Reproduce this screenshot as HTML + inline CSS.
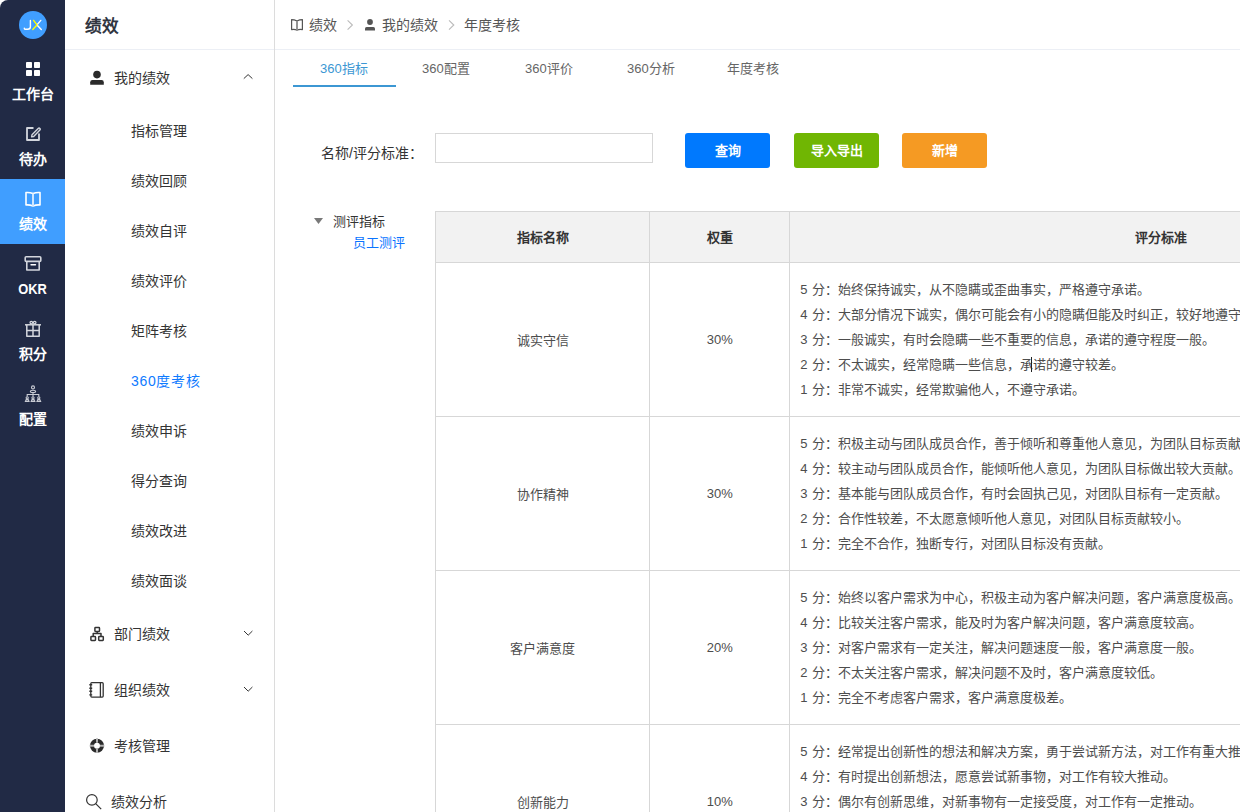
<!DOCTYPE html>
<html lang="zh-CN">
<head>
<meta charset="utf-8">
<style>
*{box-sizing:border-box;margin:0;padding:0}
html,body{width:1240px;height:812px;overflow:hidden;background:#fff}
body{position:relative;font-family:"Liberation Sans",sans-serif;color:#333}
.abs{position:absolute}
#side{position:absolute;left:0;top:0;width:65px;height:812px;background:#212a45;border-top-left-radius:8px}
.avatar{position:absolute;left:19px;top:11px;width:28px;height:28px;border-radius:50%;background:#409eff;color:#fff;font-size:14px;line-height:28px;text-align:center}
.nav{position:absolute;left:0;width:65px;height:65px;color:#fff;text-align:center}
.nav.act{background:#409eff}
.nav svg{position:absolute;left:25px;top:13px}
.nav .t{position:absolute;left:0;right:0;top:35px;font-size:14px;font-weight:bold;line-height:20px}
#panel{position:absolute;left:65px;top:0;width:210px;height:812px;background:#fff;border-right:1px solid #dcdcdc}
.ph{position:absolute;left:0;top:0;width:209px;height:50px;border-bottom:1px solid #eceff5}
.ph span{position:absolute;left:20px;top:14.5px;font-size:16.6px;font-weight:bold;line-height:24px;color:#30353f}
.mi{position:absolute;left:0;width:209px;height:20px;font-size:14px;line-height:20px;color:#333}
.mi .t{position:absolute;left:49px;top:0}
.mi svg{position:absolute}
.sub{position:absolute;left:66px;font-size:14px;line-height:20px;color:#333}
#main{position:absolute;left:275px;top:0;right:0;height:812px}
.bc{position:absolute;left:0;top:0;right:0;height:50px;border-bottom:1px solid #eceff5}
.bct{position:absolute;top:15px;font-size:14px;line-height:20px;color:#555}
.tab{position:absolute;top:59px;font-size:13px;line-height:20px;color:#666}
.tab.act{color:#3c97d3}
.lbl{position:absolute;font-size:14px;line-height:20px;color:#333}
.btn{position:absolute;top:133px;width:85px;height:35px;border-radius:3px;color:#fff;font-size:13px;font-weight:bold;text-align:center;line-height:35px}
table{position:absolute;left:160px;top:211px;border-collapse:collapse;table-layout:fixed;width:1097px}
td,th{border:1px solid #d7d7d7;font-size:13px;color:#4d4d4d;text-align:center;vertical-align:middle}
th{background:#f2f2f2;height:51px;font-weight:bold;padding-bottom:2px;color:#333}
td{height:154px}
td.c{text-align:left;padding-left:10px;white-space:nowrap;line-height:25px;word-spacing:0.4px}
</style>
</head>
<body>
<div id="side">
  <div class="avatar"></div>
  <svg class="abs" style="left:0;top:0" width="65" height="50" viewBox="0 0 65 50"><g fill="none" stroke-width="1.4" stroke-linecap="round" stroke-linejoin="round"><path d="M30.4 20.4V26.8Q30.4 29.3 27.6 29.3H25Q24.3 29.3 24.3 28.2" stroke="#fff"/><path d="M40.8 20.4L37 24.9L41.3 29.4" stroke="#fff"/><path d="M33.6 20.4L37 24.9L32.8 29.4" stroke="#ff0"/></g></svg>
  <div class="nav" style="top:49px"><div class="t">工作台</div></div>
  <div class="nav" style="top:114px"><div class="t">待办</div></div>
  <div class="nav act" style="top:179px"><div class="t">绩效</div></div>
  <div class="nav" style="top:244px"><div class="t"><span style="display:inline-block;transform:scale(0.92,1.09);transform-origin:50% 75%">OKR</span></div></div>
  <div class="nav" style="top:309px"><div class="t">积分</div></div>
  <div class="nav" style="top:374px"><div class="t">配置</div></div>
  <svg class="abs" style="left:0;top:0" width="65" height="440" viewBox="0 0 65 440">
    <g fill="#fff"><rect x="26" y="62" width="6" height="6" rx="0.8"/><rect x="34" y="62" width="6" height="6" rx="0.8"/><rect x="26" y="70" width="6" height="6" rx="0.8"/><rect x="34" y="70" width="6" height="6" rx="0.8"/></g>
    <g fill="none" stroke="#d3d6dd" stroke-width="1.8" stroke-linejoin="round">
      <path d="M33.5 128H27V140H39V133.5"/>
      <path d="M32 134.8L38.2 128.4a1.2 1.2 0 0 1 1.7 1.7L33.7 136.5L31.6 136.9Z" stroke-width="1.4"/>
    </g>
    <g fill="none" stroke="#fff" stroke-width="1.6" stroke-linejoin="round">
      <path d="M26 192.6Q29.5 192.2 33 193.6Q36.5 192.2 40 192.6V205Q36.5 204.6 33 206Q29.5 204.6 26 205Z"/>
      <path d="M33 193.6V206" stroke="#cfe6ff" stroke-width="2"/>
    </g>
    <g fill="none" stroke="#d3d6dd" stroke-width="1.6" stroke-linejoin="round">
      <rect x="25.2" y="256.8" width="15.6" height="4.6" rx="1"/>
      <path d="M26.8 261.4V270H39.2V261.4"/>
      <path d="M31 264.8H35.5" stroke="#fff" stroke-width="1.4" stroke-linecap="round"/>
    </g>
    <g fill="none" stroke="#d3d6dd" stroke-width="1.5" stroke-linejoin="round">
      <path d="M25 324.8H41"/>
      <path d="M26.8 325V336.2H39.2V325"/>
      <path d="M33 325V336.2M26.8 330.5H39.2"/>
      <circle cx="31.3" cy="322.6" r="1.3" stroke-width="1.2"/>
      <circle cx="34.7" cy="322.6" r="1.3" stroke-width="1.2"/>
    </g>
    <g fill="none" stroke="#c9ccd4" stroke-width="1.1">
      <circle cx="33" cy="387.4" r="1.5"/>
      <ellipse cx="33" cy="391.4" rx="2.6" ry="1.1"/>
      <path d="M33 392.5V394.5M27.2 396.5V394.5H38.8V396.5M33 394.5V396.5"/>
      <circle cx="27.2" cy="397.8" r="1.1"/><circle cx="33" cy="397.8" r="1.1"/><circle cx="38.8" cy="397.8" r="1.1"/>
      <path d="M25.4 401.4L26.2 399.6H28.2L29 401.4ZM31.2 401.4L32 399.6H34L34.8 401.4ZM37 401.4L37.8 399.6H39.8L40.6 401.4Z"/>
    </g>
  </svg>
</div>
<div id="panel">
  <svg class="abs" style="left:-65px;top:0" width="274" height="812" viewBox="0 0 274 812">
    <g fill="#2b2b2b">
      <circle cx="97" cy="74.6" r="3.8"/>
      <path d="M90.2 84.8V82.2Q90.2 80.1 92.5 80.1H101.5Q103.8 80.1 103.8 82.2V84.8Z"/>
    </g>
    <g fill="none" stroke="#333" stroke-width="1">
      <path d="M243.8 78.6L248.1 74.6L252.4 78.6"/>
      <path d="M244 631L248.2 635.2L252.4 631"/>
      <path d="M244 687L248.2 691.2L252.4 687"/>
    </g>
    <g fill="none" stroke="#333" stroke-width="1.5" stroke-linejoin="round">
      <rect x="94.9" y="627.6" width="4.6" height="3.8" rx="0.6"/>
      <rect x="90.9" y="636.6" width="4.6" height="3.8" rx="0.6"/>
      <rect x="98.7" y="636.6" width="4.6" height="3.8" rx="0.6"/>
      <path d="M97.2 631.4V633.6M93.2 636.6V633.6H101V636.6"/>
    </g>
    <g fill="none" stroke="#333" stroke-width="1.3" stroke-linejoin="round">
      <rect x="90.8" y="682.7" width="12.4" height="14.4" rx="1"/>
      <path d="M100.4 682.7V697.1"/>
      <path d="M89.3 684.7H92.2M89.3 688.3H92.2M89.3 691.3H92.2M89.3 694.9H92.2" stroke-width="1.4"/>
    </g>
    <g>
      <circle cx="97" cy="745.8" r="5" fill="none" stroke="#2b2b2b" stroke-width="4"/>
      <path d="M97 738.5V742.8M97 748.8V753.1M89.7 745.8H94M100 745.8H104.3" stroke="#b0b0b0" stroke-width="2"/>
    </g>
    <g fill="none" stroke="#333" stroke-width="1.2">
      <circle cx="91.9" cy="799.9" r="5.3"/>
      <path d="M95.7 803.7L101.2 809.2"/>
    </g>
  </svg>
  <div class="ph"><span>绩效</span></div>
  <div class="mi" style="top:68px"><span class="t">我的绩效</span></div>
  <div class="sub" style="top:121px">指标管理</div>
  <div class="sub" style="top:171px">绩效回顾</div>
  <div class="sub" style="top:221px">绩效自评</div>
  <div class="sub" style="top:271px">绩效评价</div>
  <div class="sub" style="top:321px">矩阵考核</div>
  <div class="sub" style="top:371px;color:#0f7bff;letter-spacing:0.7px">360度考核</div>
  <div class="sub" style="top:421px">绩效申诉</div>
  <div class="sub" style="top:471px">得分查询</div>
  <div class="sub" style="top:521px">绩效改进</div>
  <div class="sub" style="top:571px">绩效面谈</div>
  <div class="mi" style="top:624px"><span class="t">部门绩效</span></div>
  <div class="mi" style="top:680px"><span class="t">组织绩效</span></div>
  <div class="mi" style="top:736px"><span class="t">考核管理</span></div>
  <div class="mi" style="top:792px"><span class="t" style="left:46px">绩效分析</span></div>
</div>
<div id="main">
  <div class="bc">
    <svg class="abs" style="left:-275px;top:0" width="600" height="50" viewBox="0 0 600 50">
      <g fill="none" stroke="#555" stroke-width="1.2" stroke-linejoin="round">
        <path d="M291.6 19.6Q294.3 19.6 297 21V30Q294.3 29 291.6 29.6Z"/>
        <path d="M302.4 19.6Q299.7 19.6 297 21V30Q299.7 29 302.4 29.6Z"/>
        <path d="M297 21V30" stroke="#aaa" stroke-width="1.3"/>
      </g>
      <g fill="none" stroke="#bbb" stroke-width="1.1">
        <path d="M347.6 20.3L352.4 25L347.6 29.7"/>
        <path d="M449 20.3L453.8 25L449 29.7"/>
      </g>
      <g fill="#555">
        <circle cx="370" cy="22" r="2.9"/>
        <path d="M365 30.6V28.4Q365 26.9 366.6 26.9H373.4Q375 26.9 375 28.4V30.6Z"/>
      </g>
    </svg>
    <span class="bct" style="left:34px">绩效</span>
    <span class="bct" style="left:107px">我的绩效</span>
    <span class="bct" style="left:189px">年度考核</span>
  </div>
  <div class="tab act" style="left:45px">360指标</div>
  <div class="tab" style="left:147px">360配置</div>
  <div class="tab" style="left:250px">360评价</div>
  <div class="tab" style="left:352px">360分析</div>
  <div class="tab" style="left:452px">年度考核</div>
  <div class="abs" style="left:18px;top:85px;width:103px;height:2px;background:#3c97d3"></div>
  <div class="lbl" style="left:46px;top:143px">名称/评分标准：</div>
  <div class="abs" style="left:160px;top:133px;width:218px;height:30px;border:1px solid #d7d7d7"></div>
  <div class="btn" style="left:410px;background:#0079fe">查询</div>
  <div class="btn" style="left:519px;background:#70b603">导入导出</div>
  <div class="btn" style="left:627px;background:#f59a23">新增</div>
  <svg class="abs" style="left:38px;top:217px" width="12" height="8" viewBox="0 0 12 8"><path d="M1 1H10L5.5 7Z" fill="#797979"/></svg>
  <div class="lbl" style="left:58px;top:212px;font-size:13px;color:#333">测评指标</div>
  <div class="lbl" style="left:78px;top:233px;font-size:13px;color:#0a74ff">员工测评</div>
  <div class="abs" style="left:756px;top:357px;width:1px;height:15px;background:#222;z-index:2"></div>
  <table>
    <colgroup><col style="width:214px"><col style="width:140px"><col style="width:741px"></colgroup>
    <tr><th>指标名称</th><th>权重</th><th>评分标准</th></tr>
    <tr><td>诚实守信</td><td>30%</td><td class="c">5 分：始终保持诚实，从不隐瞒或歪曲事实，严格遵守承诺。<br>4 分：大部分情况下诚实，偶尔可能会有小的隐瞒但能及时纠正，较好地遵守承诺。<br>3 分：一般诚实，有时会隐瞒一些不重要的信息，承诺的遵守程度一般。<br>2 分：不太诚实，经常隐瞒一些信息，承诺的遵守较差。<br>1 分：非常不诚实，经常欺骗他人，不遵守承诺。</td></tr>
    <tr><td>协作精神</td><td>30%</td><td class="c">5 分：积极主动与团队成员合作，善于倾听和尊重他人意见，为团队目标贡献巨大。<br>4 分：较主动与团队成员合作，能倾听他人意见，为团队目标做出较大贡献。<br>3 分：基本能与团队成员合作，有时会固执己见，对团队目标有一定贡献。<br>2 分：合作性较差，不太愿意倾听他人意见，对团队目标贡献较小。<br>1 分：完全不合作，独断专行，对团队目标没有贡献。</td></tr>
    <tr><td>客户满意度</td><td>20%</td><td class="c">5 分：始终以客户需求为中心，积极主动为客户解决问题，客户满意度极高。<br>4 分：比较关注客户需求，能及时为客户解决问题，客户满意度较高。<br>3 分：对客户需求有一定关注，解决问题速度一般，客户满意度一般。<br>2 分：不太关注客户需求，解决问题不及时，客户满意度较低。<br>1 分：完全不考虑客户需求，客户满意度极差。</td></tr>
    <tr><td>创新能力</td><td>10%</td><td class="c">5 分：经常提出创新性的想法和解决方案，勇于尝试新方法，对工作有重大推动。<br>4 分：有时提出创新想法，愿意尝试新事物，对工作有较大推动。<br>3 分：偶尔有创新思维，对新事物有一定接受度，对工作有一定推动。<br>2 分：很少提出创新想法，对新事物接受较慢，对工作推动较小。<br>1 分：缺乏创新意识，墨守成规。</td></tr>
  </table>
</div>
</body>
</html>
